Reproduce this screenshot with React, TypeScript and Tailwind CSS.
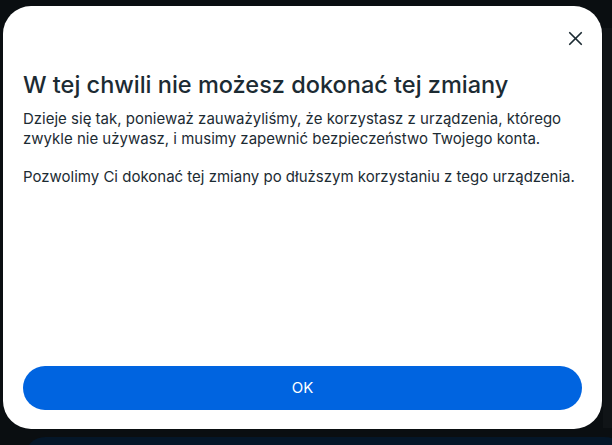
import { X } from "lucide-react";

const font = { fontFamily: "Inter, 'Noto Sans', sans-serif" };

const App = () => {
  return (
    <div
      className="relative h-[445px] w-[612px] overflow-hidden bg-[#0a0e11]"
      style={font}
    >
      {/* dark page peeking out under the dialog */}
      <div className="absolute left-[25px] top-[437px] h-[40px] w-[600px] rounded-[20px] bg-[#041628]" />
      <div className="absolute left-[603px] top-[28px] h-[400px] w-[10px] bg-[#101417]" />

      <div className="relative ml-[3px] mt-[6px] flex h-[423px] w-[599px] flex-col rounded-[28px] bg-white px-5 pb-[19px] text-[#1c2b33]">
        <div className="mt-5 flex h-6 justify-end">
          <button className="-mr-[5px] flex size-6 items-center justify-center text-[#1c2b33]">
            <X size={23} strokeWidth={1.8} />
          </button>
        </div>

        <h2 className="mt-[21px] text-[23.5px] font-medium leading-7">
          W tej chwili nie możesz dokonać tej zmiany
        </h2>
        <p className="mt-[10px] text-[15px] leading-5">
          Dzieje się tak, ponieważ zauważyliśmy, że korzystasz z urządzenia,
          którego zwykle nie używasz, i musimy zapewnić bezpieczeństwo Twojego
          konta.
        </p>
        <p className="mt-[18px] text-[15px] leading-5">
          Pozwolimy Ci dokonać tej zmiany po dłuższym korzystaniu z tego
          urządzenia.
        </p>

        <button className="mt-auto flex h-11 w-full items-center justify-center rounded-full bg-[#0064e0] text-[15px] text-white">
          OK
        </button>
      </div>
    </div>
  );
};

export default App;
